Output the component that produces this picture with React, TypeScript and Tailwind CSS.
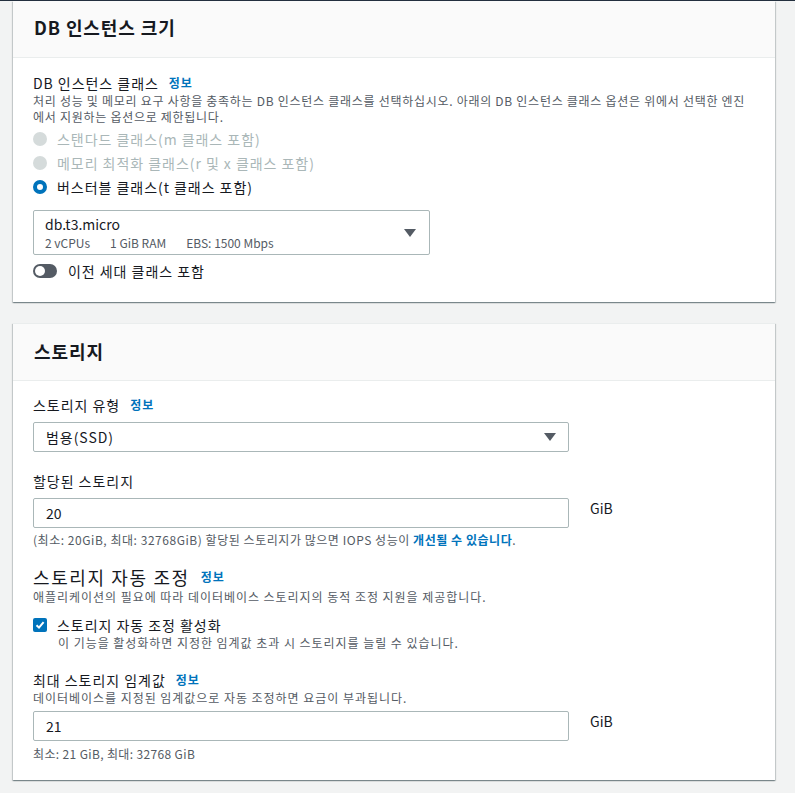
import React from "react";

function Radio({ label, state }: { label: string; state: "disabled" | "checked" }) {
  return (
    <div className="flex items-center h-[24px] gap-[10px]">
      {state === "checked" ? (
        <span className="w-[14px] h-[14px] rounded-full border-[4px] border-[#0073bb] bg-white" />
      ) : (
        <span className="w-[14px] h-[14px] rounded-full bg-[#d5dbdb]" />
      )}
      <span className={"text-[14px] " + (state === "disabled" ? "text-[#aab7b8]" : "text-[#16191f]")}>{label}</span>
    </div>
  );
}

function Caret() {
  return (
    <svg width="12" height="8" viewBox="0 0 12 8">
      <path d="M0 0 H12 L6 8 Z" fill="#545b64" />
    </svg>
  );
}

function Info() {
  return <span className="text-[12px] font-bold text-[#0073bb]">정보</span>;
}

const shadow =
  "shadow-[0_1px_1px_0_rgba(0,28,36,0.3),1px_1px_1px_0_rgba(0,28,36,0.15),-1px_1px_1px_0_rgba(0,28,36,0.15)]";

export default function App() {
  return (
    <div className="min-h-[793px] w-[795px] bg-[#f2f3f3] border-t border-[#232f3e] font-['Noto_Sans_CJK_KR',sans-serif] tracking-[0.06em] text-[#16191f] pl-[13px]">
      {/* Card 1 */}
      <section className={"w-[762px] bg-white " + shadow}>
        <header className="h-[57px] bg-[#fafafa] border-b border-[#eaeded] px-[21px] flex items-center pb-[4px]">
          <h2 className="text-[18px] font-bold leading-[24px] tracking-[0.05em]">DB 인스턴스 크기</h2>
        </header>
        <div className="px-[20px] pt-[15px] pb-[21px]">
          <div className="flex items-center gap-[10px] h-[20px] text-[14px]">
            <span>DB 인스턴스 클래스</span>
            <Info />
          </div>
          <div className="text-[12px] leading-[16px] text-[#545b64] tracking-[0.06em]">
            <div className="whitespace-nowrap">
              처리 성능 및 메모리 요구 사항을 충족하는 DB 인스턴스 클래스를 선택하십시오. 아래의 DB 인스턴스 클래스 옵션은 위에서 선택한 엔진
            </div>
            <div className="whitespace-nowrap">에서 지원하는 옵션으로 제한됩니다.</div>
          </div>
          <div className="mt-[2px]">
            <Radio label="스탠다드 클래스(m 클래스 포함)" state="disabled" />
            <Radio label="메모리 최적화 클래스(r 및 x 클래스 포함)" state="disabled" />
            <Radio label="버스터블 클래스(t 클래스 포함)" state="checked" />
          </div>
          <div className="mt-[11px] w-[397px] h-[45px] border border-[#aab7b8] rounded-[2px] pl-[11px] pr-[13px] flex items-center justify-between tracking-normal">
            <div className="flex flex-col">
              <span className="text-[14px] leading-[17px]">db.t3.micro</span>
              <div className="mt-[2px] flex gap-[20px] text-[12px] leading-[15px] text-[#545b64]">
                <span>2 vCPUs</span>
                <span>1 GiB RAM</span>
                <span>EBS: 1500 Mbps</span>
              </div>
            </div>
            <Caret />
          </div>
          <div className="mt-[6px] flex items-center gap-[11px] h-[20px]">
            <span className="w-[24px] h-[14px] rounded-full bg-[#545b64] relative">
              <span className="absolute left-[2px] top-[2px] w-[10px] h-[10px] rounded-full bg-white" />
            </span>
            <span className="text-[14px]">이전 세대 클래스 포함</span>
          </div>
        </div>
      </section>

      {/* Card 2 */}
      <section className={"mt-[21px] w-[762px] bg-white " + shadow}>
        <header className="h-[58px] bg-[#fafafa] border-b border-t border-[#eaeded] px-[21px] flex items-center pb-[2px]">
          <h2 className="text-[18px] font-bold leading-[24px] tracking-[0.05em]">스토리지</h2>
        </header>
        <div className="px-[20px] pt-[14px] pb-[18px]">
          <div className="flex items-center gap-[10px] h-[20px] text-[14px]">
            <span>스토리지 유형</span>
            <Info />
          </div>
          <div className="mt-[7px] w-[536px] h-[30px] border border-[#aab7b8] rounded-[2px] pl-[12px] pr-[12px] flex items-center justify-between">
            <span className="text-[14px]">범용(SSD)</span>
            <Caret />
          </div>

          <div className="mt-[19px] h-[20px] flex items-center text-[14px]">할당된 스토리지</div>
          <div className="mt-[7px] flex items-start gap-[21px] tracking-normal">
            <div className="w-[536px] h-[30px] border border-[#aab7b8] rounded-[2px] pl-[12px] flex items-center text-[14px]">20</div>
            <span className="text-[14px] leading-[20px]">GiB</span>
          </div>
          <p className="mt-[4px] text-[12px] leading-[16px] text-[#545b64] tracking-[0.045em]">
            (최소: 20GiB, 최대: 32768GiB) 할당된 스토리지가 많으면 IOPS 성능이{" "}
            <span className="font-bold text-[#0073bb]">개선될 수 있습니다</span>.
          </p>

          <div className="mt-[17px] flex items-center gap-[11px] h-[24px]">
            <span className="text-[18px] leading-[24px] tracking-[0.09em]">스토리지 자동 조정</span>
            <Info />
          </div>
          <p className="text-[12px] leading-[16px] text-[#545b64]">
            애플리케이션의 필요에 따라 데이터베이스 스토리지의 동적 조정 지원을 제공합니다.
          </p>

          <div className="mt-[10px] flex items-center gap-[10px] h-[20px]">
            <span className="w-[14px] h-[14px] rounded-[2px] bg-[#0073bb] flex items-center justify-center">
              <svg width="10" height="10" viewBox="0 0 10 10">
                <path d="M1.5 5.2 L4 7.6 L8.6 2.2" stroke="white" strokeWidth="2" fill="none" />
              </svg>
            </span>
            <span className="text-[14px]">스토리지 자동 조정 활성화</span>
          </div>
          <p className="pl-[25px] text-[12px] leading-[16px] text-[#545b64]">
            이 기능을 활성화하면 지정한 임계값 초과 시 스토리지를 늘릴 수 있습니다.
          </p>

          <div className="mt-[19px] flex items-center gap-[10px] h-[20px] text-[14px]">
            <span>최대 스토리지 임계값</span>
            <Info />
          </div>
          <p className="text-[12px] leading-[16px] text-[#545b64]">
            데이터베이스를 지정된 임계값으로 자동 조정하면 요금이 부과됩니다.
          </p>
          <div className="mt-[5px] flex items-start gap-[21px] tracking-normal">
            <div className="w-[536px] h-[30px] border border-[#aab7b8] rounded-[2px] pl-[12px] flex items-center text-[14px]">21</div>
            <span className="text-[14px] leading-[20px]">GiB</span>
          </div>
          <p className="mt-[5px] text-[12px] leading-[16px] text-[#545b64] tracking-[0.03em]">최소: 21 GiB, 최대: 32768 GiB</p>
        </div>
      </section>
    </div>
  );
}
